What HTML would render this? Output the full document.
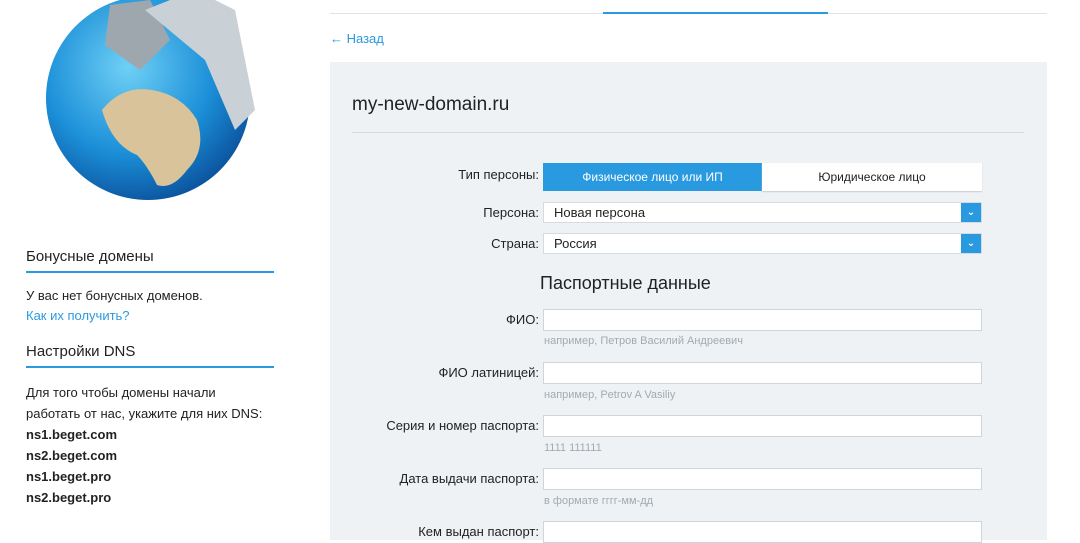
<!DOCTYPE html><html><head><meta charset="utf-8"><style>
*{margin:0;padding:0;box-sizing:border-box}
body{width:1080px;height:540px;overflow:hidden;background:#fff;font-family:"Liberation Sans","DejaVu Sans",sans-serif;color:#222;position:relative}
.a{position:absolute}
.lbl{position:absolute;right:541px;font-size:13px;text-align:right;white-space:nowrap}
.inp{position:absolute;left:543px;width:439px;height:22px;background:#fff;border:1px solid #cfd6db}
.hint{position:absolute;left:544px;font-size:11px;color:#a3aab0}
.sel{position:absolute;left:543px;width:439px;height:21px;background:#fff;border:1px solid #d5dbe0;font-size:13px;padding:2px 10px}
.sel b{position:absolute;right:0;top:0;width:20px;height:19px;background:#2a9ae0;color:#fff;font-size:10px;text-align:center;line-height:19px}
.lt{font-size:13px;position:absolute;left:26px}
</style></head><body>
<div class="a" style="left:330px;top:13px;width:717px;height:1px;background:#e0e4e7"></div>
<div class="a" style="left:603px;top:12px;width:225px;height:2px;background:#2a9ae0"></div>
<div class="a" style="left:330px;top:31px;font-size:13px;color:#2a9ae0">← Назад</div>
<svg class="a" style="left:40px;top:-10px" width="230" height="215">
<defs><radialGradient id="g" cx="40%" cy="35%" r="70%"><stop offset="0" stop-color="#6fd0f5"/><stop offset=".6" stop-color="#1b8fd8"/><stop offset="1" stop-color="#0b4f9a"/></radialGradient></defs>
<circle cx="108" cy="108" r="102" fill="url(#g)"/>
<path d="M62 120 q20-25 50-20 q30 5 45 30 q10 30-10 50 q-15 20-30 15 q-10-20-20-30 q-25-10-35-45z" fill="#d8c39a"/>
<path d="M110 10 l-40 5 l-5 40 l35 25 l30-30z" fill="#9ea7ad"/>
<path d="M105 20 l50-20 l40 20 l20 100 l-20 20 l-30-70z" fill="#c9d0d6"/>
</svg>
<div class="lt" style="top:248px;font-size:15px">Бонусные домены</div>
<div class="a" style="left:26px;top:271px;width:248px;height:2px;background:#2a9ae0"></div>
<div class="lt" style="top:288px">У вас нет бонусных доменов.</div>
<div class="lt" style="top:308px;color:#2a9ae0">Как их получить?</div>
<div class="lt" style="top:343px;font-size:15px">Настройки DNS</div>
<div class="a" style="left:26px;top:366px;width:248px;height:2px;background:#2a9ae0"></div>
<div class="lt" style="top:382px;line-height:21px">Для того чтобы домены начали<br>работать от нас, укажите для них DNS:<br><b>ns1.beget.com<br>ns2.beget.com<br>ns1.beget.pro<br>ns2.beget.pro</b></div>
<div class="a" style="left:330px;top:62px;width:717px;height:478px;background:#eef2f5"></div>
<div class="a" style="left:352px;top:94px;font-size:19px">my-new-domain.ru</div>
<div class="a" style="left:352px;top:132px;width:672px;height:1px;background:#d6dce0"></div>
<div class="lbl" style="top:167px">Тип персоны:</div>
<div class="a" style="left:543px;top:163px;width:219px;height:28px;background:#2a9ae0;color:#fff;font-size:12px;text-align:center;line-height:28px">Физическое лицо или ИП</div>
<div class="a" style="left:762px;top:163px;width:220px;height:28px;background:#fff;font-size:12px;text-align:center;line-height:28px;box-shadow:0 1px 1px #ccc">Юридическое лицо</div>
<div class="lbl" style="top:205px">Персона:</div>
<div class="sel" style="top:202px">Новая персона<b>⌄</b></div>
<div class="lbl" style="top:236px">Страна:</div>
<div class="sel" style="top:233px">Россия<b>⌄</b></div>
<div class="a" style="left:540px;top:273px;font-size:18px">Паспортные данные</div>
<div class="lbl" style="top:312px">ФИО:</div><div class="inp" style="top:309px"></div><div class="hint" style="top:335px">например, Петров Василий Андреевич</div>
<div class="lbl" style="top:365px">ФИО латиницей:</div><div class="inp" style="top:362px"></div><div class="hint" style="top:389px">например, Petrov A Vasiliy</div>
<div class="lbl" style="top:418px">Серия и номер паспорта:</div><div class="inp" style="top:415px"></div><div class="hint" style="top:442px">1111 111111</div>
<div class="lbl" style="top:471px">Дата выдачи паспорта:</div><div class="inp" style="top:468px"></div><div class="hint" style="top:495px">в формате гггг-мм-дд</div>
<div class="lbl" style="top:524px">Кем выдан паспорт:</div><div class="inp" style="top:521px"></div>
</body></html>
